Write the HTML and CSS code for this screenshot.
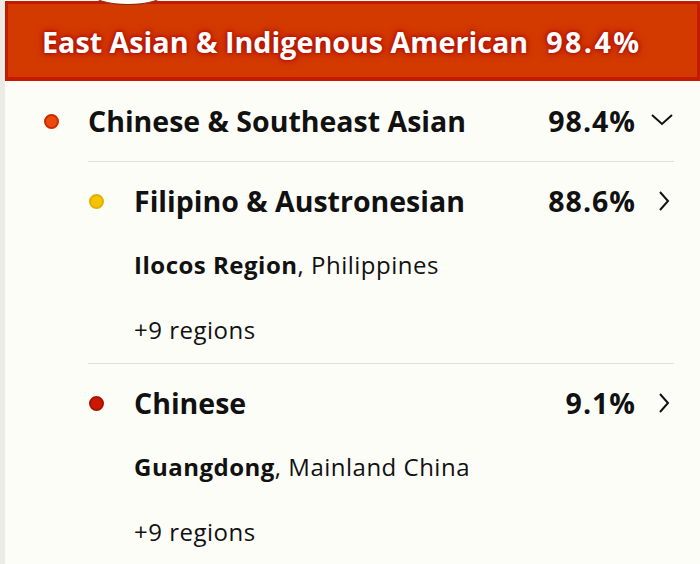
FILE: index.html
```html
<!DOCTYPE html>
<html>
<head>
<meta charset="utf-8">
<link rel="stylesheet" href="styles.css">
</head>
<body>
<div class="page">
  <div class="banner">
    <div class="knob"></div>
    <span class="banner-text">East Asian &amp; Indigenous American</span>
    <span class="banner-text banner-pct">98.4%</span>
  </div>
  <div class="group">
    <div class="group-head">
      <span class="dot dot-orange"></span>
      <span class="name">Chinese &amp; Southeast Asian</span>
      <span class="pct">98.4%</span>
      <span class="chev">
        <svg width="24" height="14" viewBox="0 0 24 14"><path d="M2 2 L12 11 L22 2" fill="none" stroke="#111" stroke-width="2"/></svg>
      </span>
    </div>
    <div class="sub">
      <div class="item">
        <div class="item-head">
          <span class="dot dot-yellow"></span>
          <span class="name">Filipino &amp; Austronesian</span>
          <span class="pct">88.6%</span>
          <span class="chev">
            <svg width="14" height="22" viewBox="0 0 14 22"><path d="M3 2 L11 11 L3 20" fill="none" stroke="#111" stroke-width="2"/></svg>
          </span>
        </div>
        <div class="detail"><b>Ilocos Region</b>, Philippines</div>
        <div class="detail more">+9 regions</div>
      </div>
      <div class="item">
        <div class="item-head">
          <span class="dot dot-red"></span>
          <span class="name">Chinese</span>
          <span class="pct">9.1%</span>
          <span class="chev">
            <svg width="14" height="22" viewBox="0 0 14 22"><path d="M3 2 L11 11 L3 20" fill="none" stroke="#111" stroke-width="2"/></svg>
          </span>
        </div>
        <div class="detail"><b>Guangdong</b>, Mainland China</div>
        <div class="detail more">+9 regions</div>
      </div>
    </div>
  </div>
</div>
</body>
</html>
```
FILE: styles.css
```css
html, body {
  margin: 0;
  padding: 0;
  background: #fdfdf8;
}
.page {
  width: 700px;
  height: 564px;
  border-left: 5px solid #ecebe6;
  box-sizing: border-box;
  font-family: "Open Sans", "Noto Sans", sans-serif;
  color: #111;
  overflow: hidden;
}
.banner {
  position: relative;
  margin-top: 1px;
  height: 80px;
  box-sizing: border-box;
  border: 3px solid #c41a00;
  border-bottom-width: 4px;
  background: #d23a00;
  display: flex;
  align-items: center;
  padding-left: 34px;
}
.knob {
  position: absolute;
  left: 84px;
  top: -21px;
  width: 70px;
  height: 20px;
  border-radius: 50%;
  background: #fdfdf8;
  border: 1px solid #8a2a10;
}
.banner-text {
  color: #fff;
  font-family: "Open Sans", "Noto Sans", sans-serif;
  font-weight: 700;
  font-size: 28.7px;
  white-space: pre;
  text-shadow: 0 0 3px #b01000, 0 0 5px #b01000, 0 0 8px #c01800;
  margin-top: 2px;
}
.banner-pct {
  margin-left: 18px;
  letter-spacing: 2.4px;
}
.group {
  margin-left: 39px;
  margin-right: 26px;
}
.group-head, .item-head {
  display: flex;
  align-items: center;
}
.group-head {
  height: 80px;
}
.dot {
  width: 15px;
  height: 15px;
  border-radius: 50%;
  flex: none;
  box-sizing: border-box;
}
.dot-orange {
  background: #ec4a0c;
  border: 2px solid #c92a00;
}
.dot-yellow {
  background: #f5c400;
  border: 2px solid #e2ae00;
}
.dot-red {
  background: #cc1800;
  border: 2px solid #a81000;
}
.group-head .dot {
  margin-right: 29px;
}
.name {
  flex: 1;
  font-weight: 700;
  font-size: 28.5px;
}
.pct {
  font-weight: 700;
  font-size: 28.5px;
  letter-spacing: 1px;
  margin-right: -1px;
}
.chev {
  width: 24px;
  margin-left: 15px;
  display: flex;
  justify-content: center;
}
.group-head .chev {
  margin-top: -2px;
}
.sub {
  margin-left: 44px;
}
.item {
  border-top: 1px solid #e2ded9;
  padding-bottom: 18px;
}
.item-head {
  height: 84px;
  padding-bottom: 6px;
  box-sizing: border-box;
}
.item-head .dot {
  margin-left: 1px;
  margin-right: 30px;
}
.item-head .chev {
  padding-left: 4px;
  box-sizing: border-box;
}
.detail {
  margin-left: 46px;
  font-size: 24px;
  letter-spacing: 0.5px;
  line-height: 30px;
  margin-top: 4px;
}
.detail.more {
  margin-top: 35px;
}
.detail b {
  font-weight: 700;
}
```
